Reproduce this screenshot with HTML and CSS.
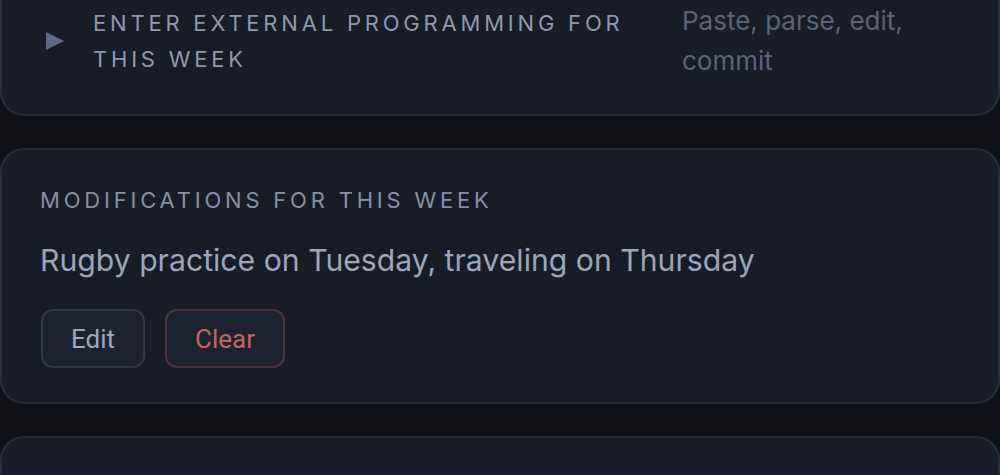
FILE: index.html
```html
<!DOCTYPE html>
<html lang="en">
<head>
<meta charset="utf-8">
<title>Weekly programming</title>
<link rel="stylesheet" href="styles.css">
</head>
<body>
<main class="page">
  <section class="card card-import">
    <div class="summary">
      <span class="caret"></span>
      <h2 class="summary-title">Enter external programming for this week</h2>
      <p class="summary-desc">Paste, parse, edit, commit</p>
    </div>
  </section>

  <section class="card card-mods">
    <h2 class="label">Modifications for this week</h2>
    <p class="mods-text">Rugby practice on Tuesday, traveling on Thursday</p>
    <div class="actions">
      <button class="btn">Edit</button>
      <button class="btn btn-danger">Clear</button>
    </div>
  </section>

  <section class="card card-next"></section>
</main>
</body>
</html>
```

FILE: styles.css
```css
* { box-sizing: border-box; }

html, body {
  margin: 0;
  padding: 0;
  background: #101217;
  height: 475px;
  overflow: hidden;
}

body {
  font-family: "Inter", "Liberation Sans", sans-serif;
  color: #9aa4ba;
}

.page {
  display: flex;
  flex-direction: column;
  gap: 32px;
  margin-top: -33px;
}

.card {
  background: #181c27;
  border: 2px solid #262c3a;
  border-radius: 24px;
}

.card-import {
  padding: 32px 38px 33px 44px;
}

.summary {
  display: flex;
  align-items: center;
}

.caret {
  width: 0;
  height: 0;
  border-top: 9px solid transparent;
  border-bottom: 9px solid transparent;
  border-left: 18px solid #5e6a84;
  flex: none;
  margin-right: 29px;
}

.summary-title {
  flex: 1;
  margin: 0;
  font-size: 22px;
  font-weight: 400;
  letter-spacing: 3.8px;
  line-height: 36px;
  text-transform: uppercase;
  color: #8e98ae;
}

.summary-desc {
  flex: none;
  width: 278px;
  margin: 0 0 0 46px;
  font-size: 26px;
  line-height: 40px;
  color: #5a647c;
}

.card-mods {
  padding: 32px 40px 34px 38px;
  display: flex;
  flex-direction: column;
}

.label {
  margin: 0;
  font-size: 22px;
  font-weight: 400;
  letter-spacing: 3.8px;
  line-height: 36px;
  text-transform: uppercase;
  color: #8590a6;
}

.mods-text {
  margin: 20px 0 0;
  font-size: 30.2px;
  line-height: 44px;
  color: #9ba5bb;
}

.actions {
  display: flex;
  gap: 20px;
  margin-top: 27px;
  padding-left: 1px;
}

.btn {
  font-family: "Roboto", "Liberation Sans", sans-serif;
  font-size: 26px;
  height: 59px;
  padding: 0 28px;
  background: #1d2230;
  border: 2px solid #2f3749;
  border-radius: 12px;
  color: #9ea9c0;
}

.btn-danger {
  color: #c2675c;
  border-color: #4e333b;
}

.card-next {
  height: 120px;
}
```
